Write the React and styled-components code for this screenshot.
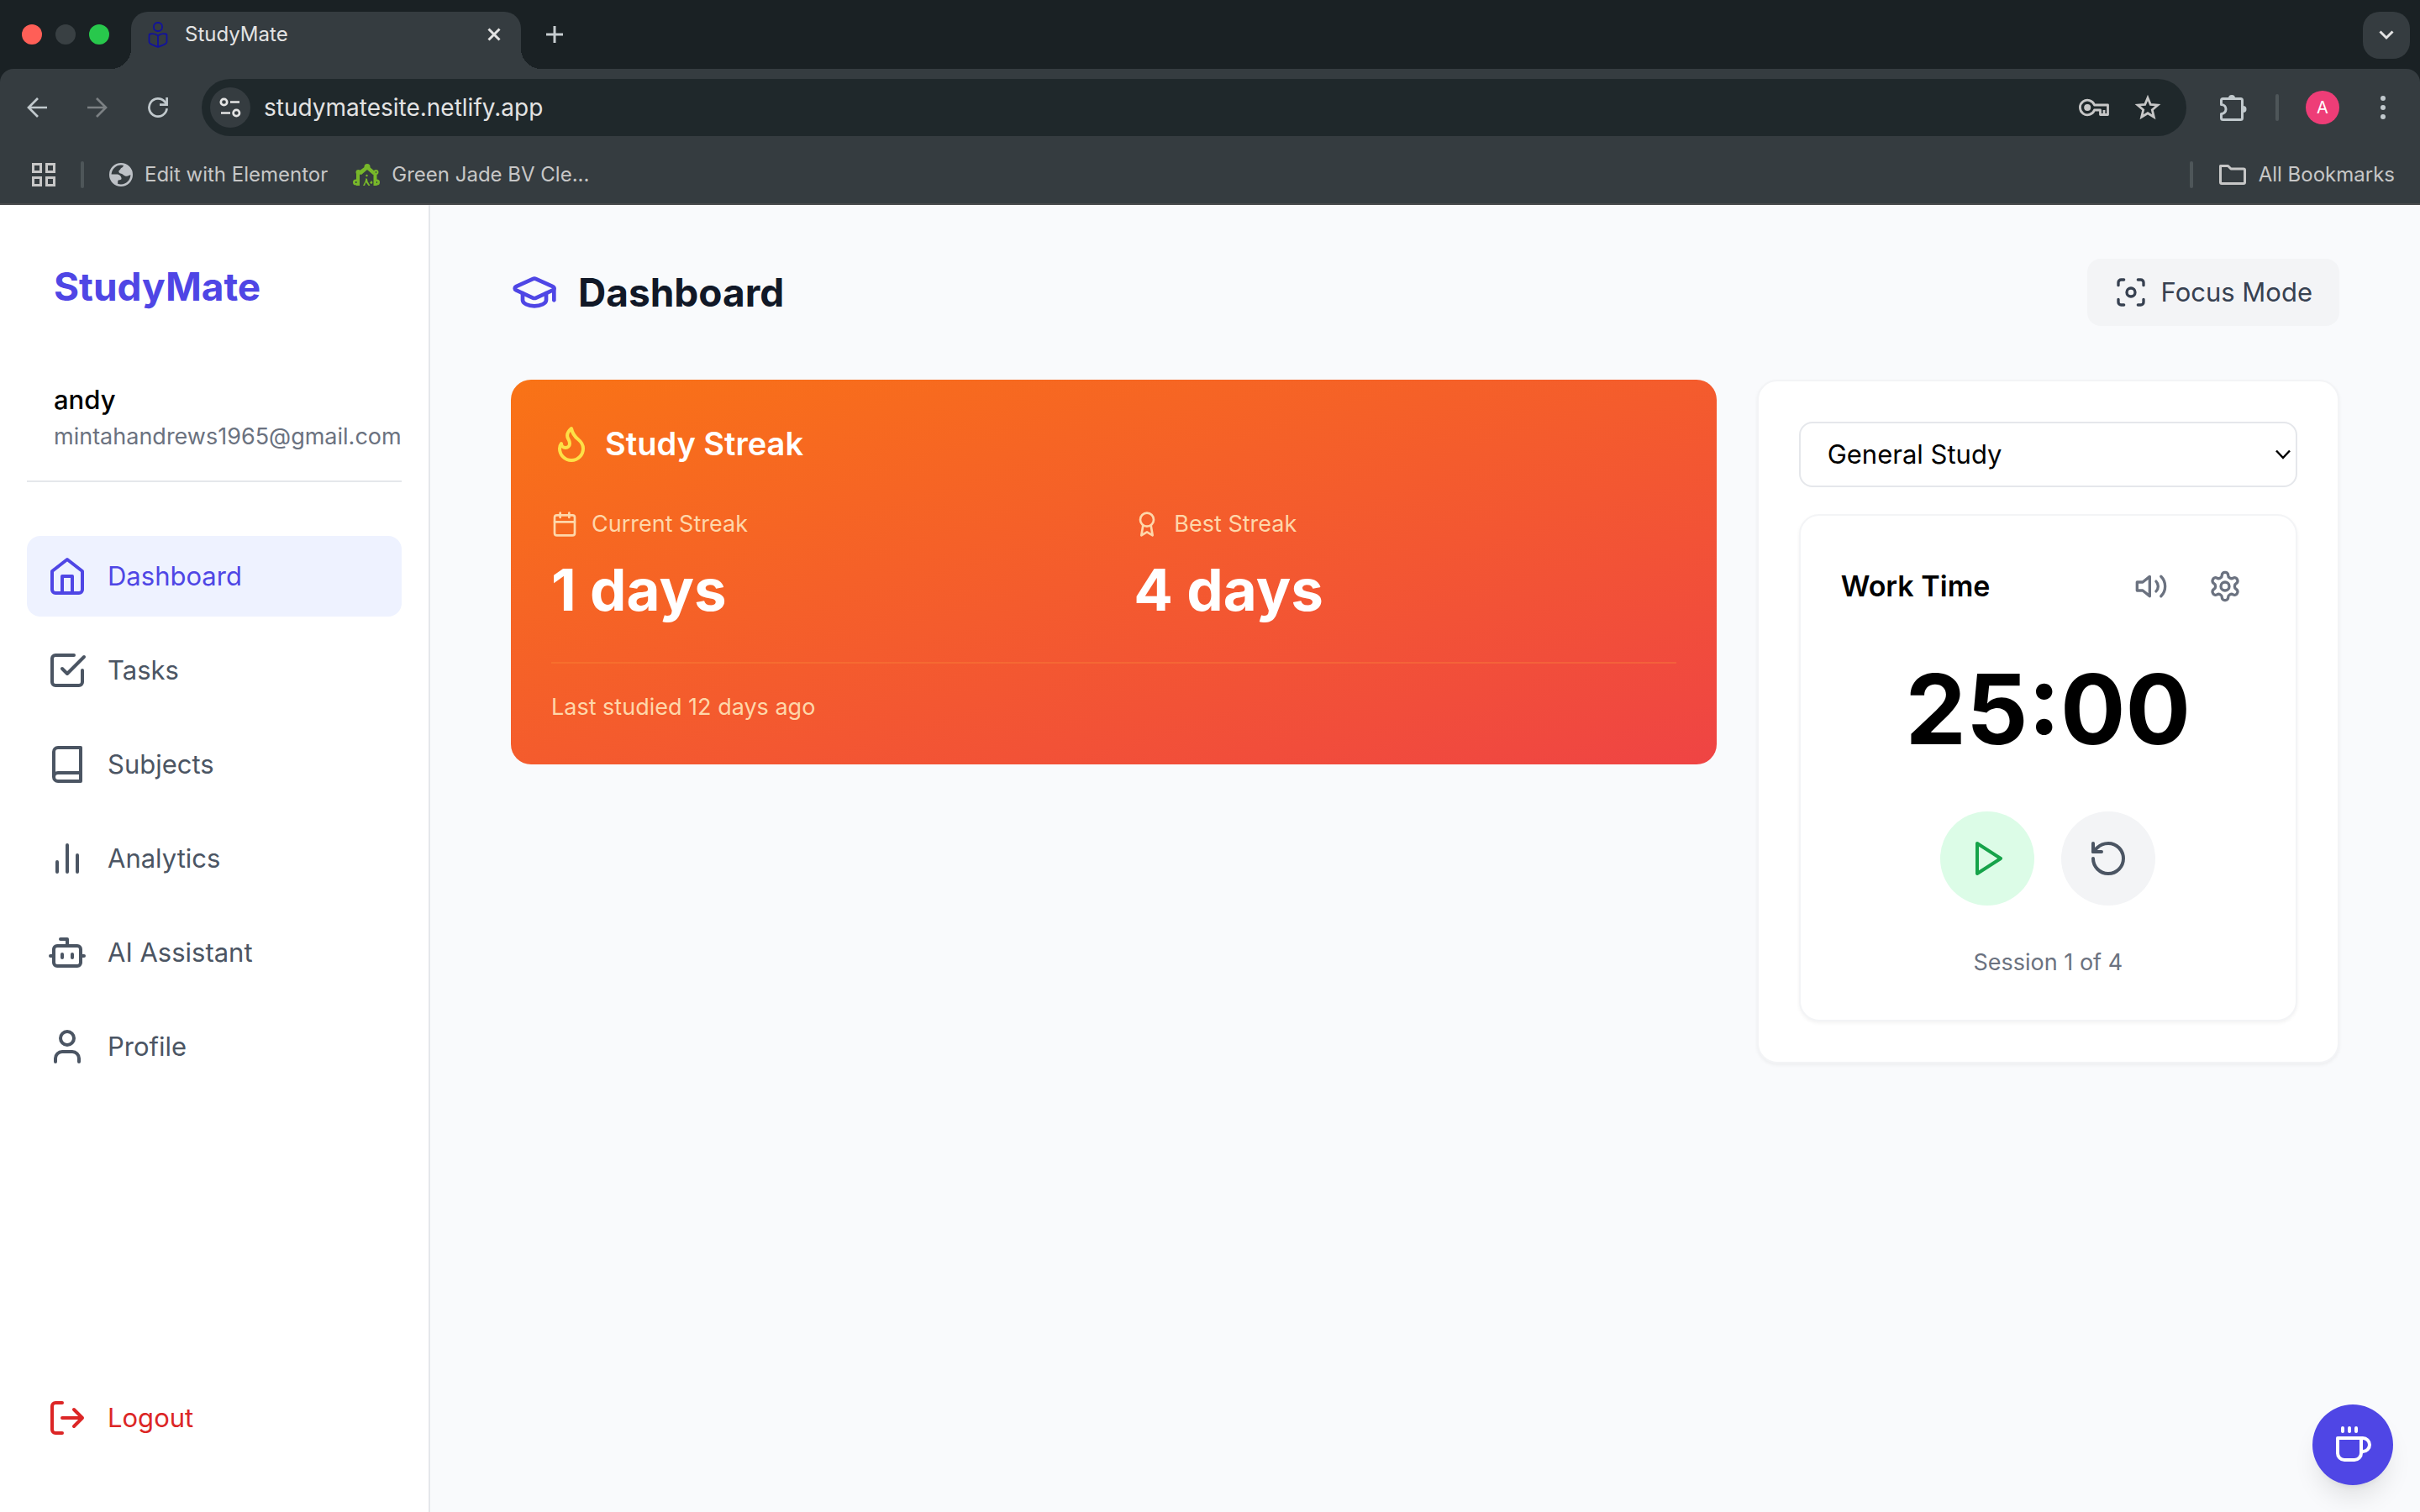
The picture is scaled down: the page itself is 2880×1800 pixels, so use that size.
import { useState } from "react";
import styled, { createGlobalStyle } from "styled-components";

const GlobalStyle = createGlobalStyle`
  *, *::before, *::after {
    box-sizing: border-box;
  }
  body {
    margin: 0;
    font-family: Inter, "Liberation Sans", sans-serif;
    font-size: 31px;
    line-height: 48px;
    color: #000;
    background: #f9fafc;
  }
  h1, h2, h3, p {
    margin: 0;
  }
  button, input, select {
    font: inherit;
    color: inherit;
  }
  button {
    border: none;
    padding: 0;
    background: none;
    cursor: pointer;
  }
  a {
    color: inherit;
    text-decoration: none;
  }
  svg {
    display: block;
    flex: none;
  }
`;

const Page = styled.div`
  min-height: 100vh;
  display: flex;
  flex-direction: column;
`;

/* ---------- browser window ---------- */

const TabStrip = styled.div`
  display: flex;
  align-items: flex-start;
  padding: 14px 12px 0 26px;
  background: #1a2124;
`;
const Lights = styled.div`
  display: flex;
  align-items: center;
  gap: 16px;
  height: 54px;
`;
const Light = styled.span`
  width: 24px;
  height: 24px;
  border-radius: 50%;
  background: ${(props) => props.$color};
`;
const Tab = styled.div`
  position: relative;
  display: flex;
  align-items: center;
  gap: 20px;
  width: 464px;
  height: 68px;
  margin-left: 26px;
  padding: 0 24px 14px 20px;
  border-radius: 20px 20px 0 0;
  background: #353c40;
  color: #e3e3e3;
  font-size: 24px;
  line-height: 32px;

  &::before,
  &::after {
    content: "";
    position: absolute;
    bottom: 0;
    width: 24px;
    height: 24px;
  }
  &::before {
    right: 100%;
    background: radial-gradient(circle at 0 0, transparent 24px, #353c40 24px);
  }
  &::after {
    left: 100%;
    background: radial-gradient(circle at 100% 0, transparent 24px, #353c40 24px);
  }
`;
const TabTitle = styled.span`
  flex: 1;
`;
const NewTab = styled.button`
  display: grid;
  place-items: center;
  height: 54px;
  margin-left: 30px;
  color: #c7cdd0;
`;
const TabSearch = styled.button`
  display: grid;
  place-items: center;
  width: 56px;
  height: 56px;
  margin-left: auto;
  border-radius: 20px;
  background: #353c40;
  color: #e3e3e3;
`;
const ToolbarBack = styled.div`
  background: #1a2124;
`;
const Toolbar = styled.div`
  display: flex;
  align-items: center;
  gap: 40px;
  padding: 12px 40px 12px 32px;
  border-radius: 16px 16px 0 0;
  background: #353c40;
  color: #c1c9cd;
`;
const NavButtons = styled.div`
  display: flex;
  gap: 48px;
`;
const ToolButton = styled.button`
  color: ${(props) => (props.$dim ? "#7b8083" : "inherit")};
`;
const Omnibox = styled.div`
  flex: 1;
  display: flex;
  align-items: center;
  gap: 16px;
  height: 68px;
  padding: 0 30px 0 10px;
  border-radius: 34px;
  background: #1f282b;
  color: #c7c7c7;
`;
const SiteInfo = styled.button`
  width: 48px;
  height: 48px;
  border-radius: 50%;
  background: #353c40;
  color: #e3e3e3;
`;
const Address = styled.input`
  flex: 1;
  min-width: 0;
  padding: 0;
  border: none;
  outline: none;
  background: transparent;
  color: #e3e3e3;
  font-size: 28px;
  line-height: 40px;
`;
const OmniboxIcons = styled.div`
  display: flex;
  align-items: center;
  gap: 30px;
`;
const ToolbarEnd = styled.div`
  display: flex;
  align-items: center;
  gap: 32px;
`;
const Divider = styled.span`
  width: 4px;
  height: 32px;
  border-radius: 2px;
  background: #4e5659;
`;
const Avatar = styled.button`
  width: 40px;
  height: 40px;
  margin-right: 16px;
  border-radius: 50%;
  background: #ee3d77;
  color: #fff;
  font-size: 20px;
  line-height: 40px;
`;
const BookmarkBar = styled.div`
  display: flex;
  align-items: center;
  gap: 30px;
  height: 70px;
  padding: 0 30px 0 38px;
  border-bottom: 2px solid #47494b;
  background: #353c40;
  color: #c7c7c7;
  font-size: 24px;
  line-height: 32px;
`;
const Bookmark = styled.a`
  display: flex;
  align-items: center;
  gap: 14px;
`;
const BookmarksEnd = styled.div`
  display: flex;
  align-items: center;
  gap: 30px;
  margin-left: auto;
`;

/* ---------- sidebar ---------- */

const Body = styled.div`
  flex: 1;
  display: flex;
`;
const Sidebar = styled.aside`
  flex: none;
  display: flex;
  flex-direction: column;
  width: 512px;
  padding: 64px 32px;
  border-right: 2px solid #e5e7eb;
  background: #fff;
`;
const Logo = styled.h1`
  padding: 0 32px;
  color: #4f46e5;
  font-size: 46px;
  font-weight: 700;
  line-height: 66px;
`;
const User = styled.div`
  margin: 62px 0 64px;
  padding: 16px 0 32px 32px;
  border-bottom: 2px solid #e5e7eb;
`;
const UserName = styled.p`
  font-weight: 500;
`;
const UserMail = styled.p`
  color: #6b7280;
  font-size: 27px;
  line-height: 40px;
  white-space: nowrap;
`;
const Nav = styled.nav`
  display: flex;
  flex-direction: column;
  gap: 16px;
`;
const NavItem = styled.a`
  display: flex;
  align-items: center;
  gap: 24px;
  padding: 24px;
  border-radius: 16px;
  background: ${(props) => (props.$active ? "#eef2ff" : "transparent")};
  color: ${(props) => (props.$active ? "#4f46e5" : "#4b5563")};
`;
const Logout = styled.button`
  display: flex;
  align-items: center;
  gap: 24px;
  margin-top: auto;
  padding: 24px;
  color: #dc2626;
`;

/* ---------- main ---------- */

const Main = styled.main`
  flex: 1;
  padding: 64px 96px;
`;
const Header = styled.header`
  display: flex;
  align-items: center;
  justify-content: space-between;
  margin-bottom: 64px;
`;
const PageTitle = styled.h2`
  display: flex;
  align-items: center;
  gap: 24px;
  color: #111827;
  font-size: 46px;
  font-weight: 700;
  line-height: 66px;

  svg {
    color: #4f46e5;
  }
`;
const FocusButton = styled.button`
  display: flex;
  align-items: center;
  gap: 16px;
  padding: 16px 32px;
  border-radius: 16px;
  background: #f3f4f6;
  color: #374151;
`;
const Grid = styled.div`
  display: grid;
  grid-template-columns: repeat(3, minmax(0, 1fr));
  gap: 48px;
  align-items: start;
`;
const StreakCard = styled.section`
  grid-column: span 2;
  padding: 48px;
  border-radius: 24px;
  background: linear-gradient(to bottom right, #f97316, #ef4444);
  color: #fff;
`;
const StreakTitle = styled.h3`
  display: flex;
  align-items: center;
  gap: 16px;
  margin-bottom: 48px;
  font-size: 38px;
  font-weight: 600;
  line-height: 56px;

  svg {
    color: #fde047;
  }
`;
const Stats = styled.div`
  display: grid;
  grid-template-columns: 1fr 1fr;
  gap: 48px;
`;
const StatLabel = styled.p`
  display: flex;
  align-items: center;
  gap: 16px;
  margin-bottom: 16px;
  color: #fed7aa;
  font-size: 27px;
  line-height: 40px;
`;
const StatValue = styled.p`
  font-size: 69px;
  font-weight: 700;
  line-height: 84px;
`;
const LastStudied = styled.p`
  margin-top: 44px;
  padding-top: 32px;
  border-top: 2px solid rgba(251, 146, 60, 0.3);
  color: #fed7aa;
  font-size: 27px;
  line-height: 40px;
`;
const Card = styled.section`
  padding: 48px;
  border: 2px solid #f3f4f6;
  border-radius: 24px;
  background: #fff;
  box-shadow: 0 2px 4px rgba(0, 0, 0, 0.05);
`;
const SelectBox = styled.div`
  display: grid;
  align-items: center;
  margin-bottom: 32px;

  select,
  svg {
    grid-area: 1 / 1;
  }
  svg {
    justify-self: end;
    margin-right: 8px;
    pointer-events: none;
  }
`;
const Select = styled.select`
  appearance: none;
  width: 100%;
  height: 78px;
  padding: 0 32px;
  border: 2px solid #e5e7eb;
  border-radius: 16px;
  background: #fff;
`;
const TimerHead = styled.div`
  display: flex;
  align-items: center;
  justify-content: space-between;
  margin-bottom: 48px;
`;
const TimerTitle = styled.h3`
  font-size: 34px;
  font-weight: 600;
  line-height: 56px;
`;
const TimerTools = styled.div`
  display: flex;
  gap: 16px;
  color: #6b7280;

  button {
    padding: 16px;
  }
`;
const Clock = styled.p`
  margin-bottom: 58px;
  font-size: 115px;
  font-weight: 700;
  line-height: 126px;
  text-align: center;
`;
const Controls = styled.div`
  display: flex;
  justify-content: center;
  gap: 32px;
  margin-bottom: 48px;
`;
const RoundButton = styled.button`
  padding: 32px;
  border-radius: 50%;
  background: ${(props) => (props.$primary ? "#dcfce7" : "#f3f4f6")};
  color: ${(props) => (props.$primary ? "#16a34a" : "#4b5563")};
`;
const Session = styled.p`
  color: #6b7280;
  font-size: 27px;
  line-height: 40px;
  text-align: center;
`;
const BreakButton = styled.button`
  position: fixed;
  right: 32px;
  bottom: 32px;
  padding: 24px;
  border-radius: 50%;
  background: #4f46e5;
  color: #fff;
  box-shadow: 0 20px 30px -6px rgba(0, 0, 0, 0.1), 0 8px 12px -8px rgba(0, 0, 0, 0.1);
`;

/* ---------- icons ---------- */

const Icon = ({ size = 48, children }) => (
  <svg
    width={size}
    height={size}
    viewBox="0 0 24 24"
    fill="none"
    stroke="currentColor"
    strokeWidth="2"
    strokeLinecap="round"
    strokeLinejoin="round"
    aria-hidden="true"
  >
    {children}
  </svg>
);

// drawn 1:1 in pixels, for the browser bars
const BarIcon = ({ w, h = w, stroke = 3, children }) => (
  <svg
    width={w}
    height={h}
    viewBox={`0 0 ${w} ${h}`}
    fill="none"
    stroke="currentColor"
    strokeWidth={stroke}
    aria-hidden="true"
  >
    {children}
  </svg>
);

const navItems = [
  {
    label: "Dashboard",
    icon: (
      <>
        <path d="m3 9 9-7 9 7v11a2 2 0 0 1-2 2H5a2 2 0 0 1-2-2z" />
        <polyline points="9 22 9 12 15 12 15 22" />
      </>
    ),
  },
  {
    label: "Tasks",
    icon: (
      <>
        <path d="m9 11 3 3L22 4" />
        <path d="M21 12v7a2 2 0 0 1-2 2H5a2 2 0 0 1-2-2V5a2 2 0 0 1 2-2h11" />
      </>
    ),
  },
  {
    label: "Subjects",
    icon: <path d="M4 19.5v-15A2.5 2.5 0 0 1 6.5 2H20v20H6.5a2.5 2.5 0 0 1 0-5H20" />,
  },
  {
    label: "Analytics",
    icon: <path d="M18 20V10M12 20V4M6 20v-6" />,
  },
  {
    label: "AI Assistant",
    icon: (
      <>
        <path d="M12 8V4H8" />
        <rect width="16" height="12" x="4" y="8" rx="2" />
        <path d="M2 14h2M20 14h2M15 13v2M9 13v2" />
      </>
    ),
  },
  {
    label: "Profile",
    icon: (
      <>
        <path d="M19 21v-2a4 4 0 0 0-4-4H9a4 4 0 0 0-4 4v2" />
        <circle cx="12" cy="7" r="4" />
      </>
    ),
  },
];

const Browser = () => (
  <div>
    <TabStrip>
      <Lights>
        <Light $color="#ff5f57" />
        <Light $color="#394043" />
        <Light $color="#28c84c" />
      </Lights>
      <Tab>
        <svg width="24" height="32" viewBox="0 0 24 32" fill="none" stroke="#12129c" strokeWidth="1.8">
          <rect x="7" y="2" width="10" height="10" rx="4.5" />
          <path d="M12 17.5C9 15 5 15 2.5 15.5Q1.5 15.7 1.5 17V25C1.5 28 8 29 12 31C16 29 22.5 28 22.5 25V17Q22.5 15.7 21.5 15.5C19 15 15 15 12 17.5V31" />
        </svg>
        <TabTitle>StudyMate</TabTitle>
        <button aria-label="Close tab">
          <BarIcon w={16}>
            <path d="M1.5 1.5l13 13M14.5 1.5l-13 13" />
          </BarIcon>
        </button>
      </Tab>
      <NewTab aria-label="New tab">
        <BarIcon w={20}>
          <path d="M10 0v20M0 10h20" />
        </BarIcon>
      </NewTab>
      <TabSearch aria-label="Search tabs">
        <BarIcon w={18} h={12}>
          <path d="M1.5 1.5L9 9l7.5-7.5" />
        </BarIcon>
      </TabSearch>
    </TabStrip>
    <ToolbarBack>
      <Toolbar>
        <NavButtons>
          <ToolButton aria-label="Back">
            <BarIcon w={24} stroke={2.7}>
              <path d="M24 12H2M13 1L2 12l11 11" />
            </BarIcon>
          </ToolButton>
          <ToolButton $dim aria-label="Forward">
            <BarIcon w={24} stroke={2.7}>
              <path d="M0 12h22M11 1l11 11-11 11" />
            </BarIcon>
          </ToolButton>
          <ToolButton aria-label="Reload">
            <BarIcon w={24} stroke={2.7}>
              <path d="M22.6 13.2A10.6 10.6 0 1 1 20 5l2.6 3.3" />
              <path d="M22.6 0v8.6H14" />
            </BarIcon>
          </ToolButton>
        </NavButtons>
        <Omnibox>
          <SiteInfo aria-label="Site information">
            <BarIcon w={48} stroke={2.7}>
              <circle cx="16.5" cy="17.5" r="3.7" />
              <path d="M24 17.5h11M13 30.5h11" />
              <circle cx="31.3" cy="30.5" r="3.7" />
            </BarIcon>
          </SiteInfo>
          <Address aria-label="Address" defaultValue="studymatesite.netlify.app" />
          <OmniboxIcons>
            <ToolButton aria-label="Passwords">
              <BarIcon w={36} h={22} stroke={2.8}>
                <path d="M18.5 8A8.8 8.8 0 1 0 18.5 14H25.5V19.5H34.5V8z" strokeLinejoin="round" />
                <circle cx="10.2" cy="11" r="4" fill="currentColor" stroke="none" />
                <path d="M30 14v5" />
              </BarIcon>
            </ToolButton>
            <ToolButton aria-label="Bookmark this page">
              <BarIcon w={32} stroke={2.8}>
                <path d="M16 4.5l3.3 8 8.6.7-6.6 5.6 2 8.4L16 22.7l-7.3 4.5 2-8.4-6.6-5.6 8.6-.7z" />
              </BarIcon>
            </ToolButton>
          </OmniboxIcons>
        </Omnibox>
        <ToolbarEnd>
          <ToolButton aria-label="Extensions">
            <BarIcon w={34} h={32}>
              <path
                d="M1.5 12.500V7.5Q1.5 5.5 3.5 5.5H24.5Q26.5 5.5 26.5 7.5V28.5Q26.5 30.5 24.5 30.5H3.5Q1.5 30.5 1.5 28.5V23.5A5.5 5.5 0 0 0 1.5 12.5z"
                strokeLinejoin="round"
              />
              <path d="M10 5a4 4 0 0 1 8 0zM27.5 14a4 4 0 0 1 0 8z" fill="currentColor" stroke="none" />
            </BarIcon>
          </ToolButton>
          <Divider />
          <Avatar aria-label="Profile">A</Avatar>
          <ToolButton aria-label="Menu">
            <BarIcon w={8} h={30}>
              <g fill="currentColor" stroke="none">
                <circle cx="4" cy="4" r="3" />
                <circle cx="4" cy="15" r="3" />
                <circle cx="4" cy="26" r="3" />
              </g>
            </BarIcon>
          </ToolButton>
        </ToolbarEnd>
      </Toolbar>
    </ToolbarBack>
    <BookmarkBar>
      <ToolButton aria-label="Apps">
        <BarIcon w={28}>
          <path d="M1.5 1.5h9v9h-9zM17.5 1.5h9v9h-9zM1.5 17.5h9v9h-9zM17.5 17.5h9v9h-9z" />
        </BarIcon>
      </ToolButton>
      <Divider />
      <Bookmark href="#">
        <svg width="28" height="28" viewBox="0 0 28 28" fill="#bdc1c6" aria-hidden="true">
          <circle cx="14" cy="14" r="12.7" fill="none" stroke="#bdc1c6" strokeWidth="2.6" />
          <path d="M17 2C17 6 14 5 13 8C10.5 9 11 12 13.5 12.5C16 12.5 16.5 15 19 15.5C22 16.5 24 14 27 14A13 13 0 0 0 17 2z" />
          <path d="M1 13.5H10C13 14 14 16 14.5 18C15 20.5 12 20 11 20.5C9.5 21.5 11 23 9.5 26A13 13 0 0 1 1 13.5z" />
        </svg>
        Edit with Elementor
      </Bookmark>
      <Bookmark href="#">
        <svg width="32" height="28" viewBox="0 0 32 28" fill="#78b82a" aria-hidden="true">
          <path d="M6 27V13L17 5l9.500 8v14" fill="none" stroke="#78b82a" strokeWidth="4" />
          <path d="M8 13l9-9 9 9-2 1-7-6-7 6z" />
          <circle cx="17" cy="4.5" r="3.5" />
          <circle cx="6.5" cy="11" r="3" />
          <circle cx="27.5" cy="11" r="3" />
          <circle cx="3.5" cy="23" r="3.5" />
          <circle cx="28.5" cy="23" r="3.5" />
          <circle cx="16.5" cy="15" r="1.2" />
          <path d="M12 27l2.500-5 1-4 1.500 1 .5 3 3 5h-2l-3-4-1.500 4zM20 24l2-3 1.500 2-1 2z" />
          <path d="M3 23h1.500M27 11h1M28 23h1" stroke="#353c40" strokeWidth="2" />
        </svg>
        Green Jade BV Cle...
      </Bookmark>
      <BookmarksEnd>
        <Divider />
        <Bookmark href="#">
          <BarIcon w={34} h={26}>
            <path
              d="M2.5 2.5H11.5L15 6H30Q31.5 6 31.5 7.5V22Q31.5 23.5 30 23.5H4Q2.5 23.5 2.5 22V2.5z"
              strokeLinejoin="round"
            />
          </BarIcon>
          All Bookmarks
        </Bookmark>
      </BookmarksEnd>
    </BookmarkBar>
  </div>
);

const Streak = () => (
  <StreakCard>
    <StreakTitle>
      <Icon>
        <path d="M8.5 14.5A2.5 2.5 0 0 0 11 12c0-1.38-.5-2-1-3-1.072-2.143-.224-4.054 2-6 .5 2.5 2 4.9 4 6.5 2 1.6 3 3.5 3 5.5a7 7 0 1 1-14 0c0-1.153.433-2.294 1-3a2.5 2.5 0 0 0 2.5 2.5z" />
      </Icon>
      Study Streak
    </StreakTitle>
    <Stats>
      <div>
        <StatLabel>
          <Icon size={32}>
            <rect width="18" height="18" x="3" y="4" rx="2" />
            <path d="M16 2v4M8 2v4M3 10h18" />
          </Icon>
          Current Streak
        </StatLabel>
        <StatValue>1 days</StatValue>
      </div>
      <div>
        <StatLabel>
          <Icon size={32}>
            <circle cx="12" cy="8" r="6" />
            <path d="M15.477 12.89 17 22l-5-3-5 3 1.523-9.11" />
          </Icon>
          Best Streak
        </StatLabel>
        <StatValue>4 days</StatValue>
      </div>
    </Stats>
    <LastStudied>Last studied 12 days ago</LastStudied>
  </StreakCard>
);

const Timer = () => {
  const [subject, setSubject] = useState("general");
  return (
    <Card>
      <SelectBox>
        <Select
          aria-label="Subject"
          value={subject}
          onChange={(e) => setSubject(e.target.value)}
        >
          <option value="general">General Study</option>
        </Select>
        <BarIcon w={18} h={12} stroke={2.5}>
          <path d="M1 1.5l8 8.5 8-8.5" />
        </BarIcon>
      </SelectBox>
      <Card as="div">
        <TimerHead>
          <TimerTitle>Work Time</TimerTitle>
          <TimerTools>
            <button aria-label="Sound">
              <Icon size={40}>
                <polygon points="11 5 6 9 2 9 2 15 6 15 11 19 11 5" />
                <path d="M15.54 8.46a5 5 0 0 1 0 7.07" />
                <path d="M19.07 4.93a10 10 0 0 1 0 14.14" />
              </Icon>
            </button>
            <button aria-label="Settings">
              <Icon size={40}>
                <path d="M12.22 2h-.44a2 2 0 0 0-2 2v.18a2 2 0 0 1-1 1.73l-.43.25a2 2 0 0 1-2 0l-.15-.08a2 2 0 0 0-2.73.73l-.22.38a2 2 0 0 0 .73 2.73l.15.1a2 2 0 0 1 1 1.72v.51a2 2 0 0 1-1 1.74l-.15.09a2 2 0 0 0-.73 2.73l.22.38a2 2 0 0 0 2.73.73l.15-.08a2 2 0 0 1 2 0l.43.25a2 2 0 0 1 1 1.73V20a2 2 0 0 0 2 2h.44a2 2 0 0 0 2-2v-.18a2 2 0 0 1 1-1.73l.43-.25a2 2 0 0 1 2 0l.15.08a2 2 0 0 0 2.73-.73l.22-.39a2 2 0 0 0-.73-2.73l-.15-.08a2 2 0 0 1-1-1.74v-.5a2 2 0 0 1 1-1.74l.15-.09a2 2 0 0 0 .73-2.73l-.22-.38a2 2 0 0 0-2.73-.73l-.15.08a2 2 0 0 1-2 0l-.43-.25a2 2 0 0 1-1-1.73V4a2 2 0 0 0-2-2z" />
                <circle cx="12" cy="12" r="3" />
              </Icon>
            </button>
          </TimerTools>
        </TimerHead>
        <Clock>25:00</Clock>
        <Controls>
          <RoundButton $primary aria-label="Start">
            <Icon>
              <polygon points="6 3 20 12 6 21 6 3" />
            </Icon>
          </RoundButton>
          <RoundButton aria-label="Reset">
            <Icon>
              <path d="M3 12a9 9 0 1 0 9-9 9.75 9.75 0 0 0-6.74 2.74L3 8" />
              <path d="M3 3v5h5" />
            </Icon>
          </RoundButton>
        </Controls>
        <Session>Session 1 of 4</Session>
      </Card>
    </Card>
  );
};

const App = () => {
  return (
    <Page>
      <GlobalStyle />
      <Browser />
      <Body>
        <Sidebar>
          <Logo>StudyMate</Logo>
          <User>
            <UserName>andy</UserName>
            <UserMail>mintahandrews1965@gmail.com</UserMail>
          </User>
          <Nav>
            {navItems.map((item, i) => (
              <NavItem href="#" key={item.label} $active={i === 0}>
                <Icon>{item.icon}</Icon>
                {item.label}
              </NavItem>
            ))}
          </Nav>
          <Logout>
            <Icon>
              <path d="M9 21H5a2 2 0 0 1-2-2V5a2 2 0 0 1 2-2h4" />
              <path d="m16 17 5-5-5-5M21 12H9" />
            </Icon>
            Logout
          </Logout>
        </Sidebar>
        <Main>
          <Header>
            <PageTitle>
              <Icon size={56}>
                <path d="M21.42 10.922a1 1 0 0 0-.019-1.838L12.83 5.18a2 2 0 0 0-1.66 0L2.6 9.08a1 1 0 0 0 0 1.832l8.57 3.908a2 2 0 0 0 1.66 0z" />
                <path d="M22 10v6" />
                <path d="M6 12.5V16a6 3 0 0 0 12 0v-3.5" />
              </Icon>
              Dashboard
            </PageTitle>
            <FocusButton>
              <Icon size={40}>
                <circle cx="12" cy="12" r="3" />
                <path d="M3 7V5a2 2 0 0 1 2-2h2M17 3h2a2 2 0 0 1 2 2v2M21 17v2a2 2 0 0 1-2 2h-2M7 21H5a2 2 0 0 1-2-2v-2" />
              </Icon>
              Focus Mode
            </FocusButton>
          </Header>
          <Grid>
            <Streak />
            <Timer />
          </Grid>
        </Main>
      </Body>
      <BreakButton aria-label="Take a break">
        <Icon>
          <path d="M17 8h1a4 4 0 1 1 0 8h-1" />
          <path d="M3 8h14v9a4 4 0 0 1-4 4H7a4 4 0 0 1-4-4Z" />
          <path d="M6 2v2M10 2v2M14 2v2" />
        </Icon>
      </BreakButton>
    </Page>
  );
};

export default App;
